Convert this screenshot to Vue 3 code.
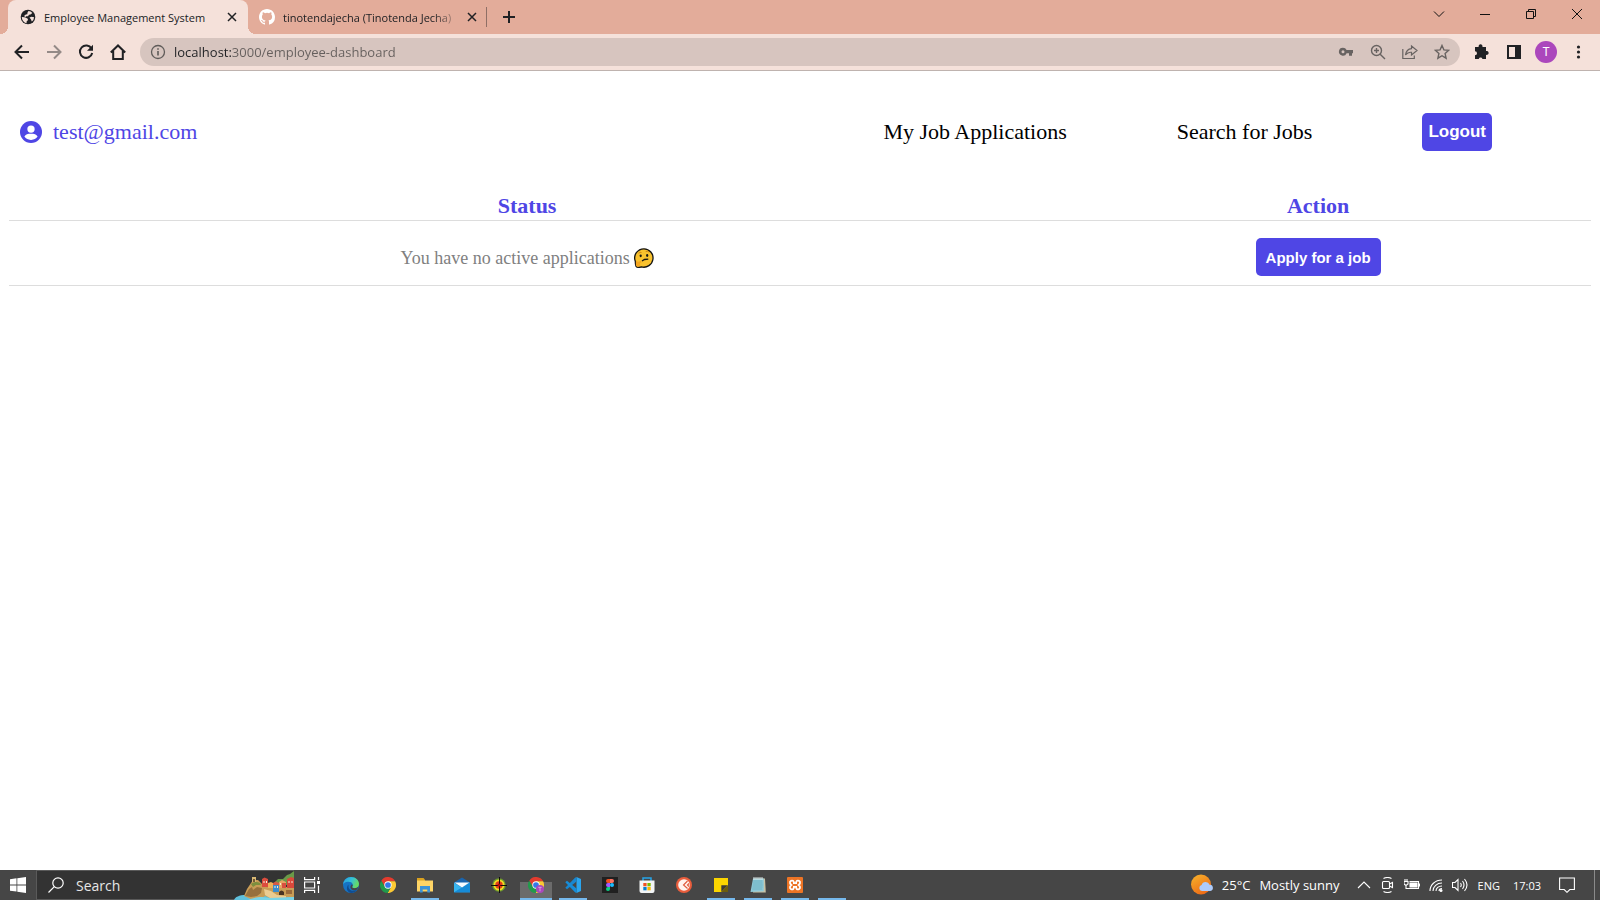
<script setup>
import { ref } from 'vue'

const address = ref('localhost:3000/employee-dashboard')
const query = ref('')
</script>

<template>
  <div class="screen">
    <header class="browser">
      <div class="strip">
        <div class="tabs" role="tablist">
          <div class="tab active" role="tab" aria-selected="true">
            <svg class="fav" viewBox="0 0 16 16"><circle cx="8" cy="8" r="7.3" fill="#202124" /><path d="M1.800 8l2.700.2 2 .8 1.500 1-.3 1.500-1 .8-.2 1.900C3.800 13.600 1.800 11 1.800 8zM8.500 2c1.500.2 2.800.8 3.800 1.900L10.500 5.500 9 5.800 8 7.200H6l-.5 1L4 7l1.800-1.500 1.500-.3.2-1.700zM9.500 8.500l2-.8 2.600.5a6.200 6.200 0 0 1-2.300 4.400l-.8-2z" fill="#f5e1da" /></svg>
            <span class="title">Employee Management System</span>
            <button class="close" aria-label="Close tab"><svg viewBox="0 0 10 10"><path d="M1 1l8 8M9 1L1 9" /></svg></button>
          </div>
          <div class="tab" role="tab" aria-selected="false">
            <svg class="fav" viewBox="0 0 16 16"><path fill="#fff" d="M8 0C3.580 0 0 3.580 0 8c0 3.540 2.290 6.530 5.470 7.590.4.07.55-.17.55-.38 0-.19-.01-.82-.01-1.490-2.010.37-2.530-.49-2.690-.94-.09-.23-.48-.94-.82-1.130-.28-.15-.68-.52-.01-.53.63-.01 1.080.58 1.230.82.72 1.210 1.870.87 2.330.66.07-.52.28-.87.51-1.070-1.780-.2-3.640-.89-3.640-3.950 0-.87.31-1.590.82-2.150-.08-.2-.36-1.020.08-2.120 0 0 .67-.21 2.200.82a7.600 7.600 0 0 1 4 0c1.530-1.040 2.200-.82 2.200-.82.44 1.100.16 1.920.08 2.120.51.56.82 1.270.82 2.150 0 3.070-1.870 3.750-3.650 3.950.29.25.54.73.54 1.480 0 1.070-.01 1.930-.01 2.200 0 .21.15.46.55.38A8 8 0 0 0 16 8c0-4.420-3.580-8-8-8z" /></svg>
            <span class="title faded">tinotendajecha (Tinotenda Jecha)</span>
            <button class="close" aria-label="Close tab"><svg viewBox="0 0 10 10"><path d="M1 1l8 8M9 1L1 9" /></svg></button>
          </div>
          <button class="newtab" aria-label="New tab"><svg viewBox="0 0 12 12"><path d="M6 0v12M0 6h12" /></svg></button>
        </div>
        <div class="window">
          <button aria-label="Search tabs"><svg viewBox="0 0 12 12"><path d="M1 3.500l5 5 5-5" /></svg></button>
          <button aria-label="Minimize"><svg viewBox="0 0 12 12"><path d="M1 6.500h10" /></svg></button>
          <button aria-label="Restore"><svg viewBox="0 0 12 12"><path d="M1.500 3.500h7v7h-7zM3.500 3.500v-2h7v7h-2" /></svg></button>
          <button aria-label="Close"><svg viewBox="0 0 12 12"><path d="M1 1l10 10M11 1L1 11" /></svg></button>
        </div>
      </div>

      <div class="toolbar">
        <button class="tool" aria-label="Back"><svg viewBox="0 0 16 16"><path d="M15 8H2M8 1.500L1.500 8 8 14.500" /></svg></button>
        <button class="tool dim" aria-label="Forward"><svg viewBox="0 0 16 16"><path d="M1 8h13M8 1.500L14.500 8 8 14.500" /></svg></button>
        <button class="tool" aria-label="Reload"><svg viewBox="0 0 16 16"><path d="M13.500 4.500A6.200 6.200 0 1 0 14.200 9" /><path d="M15 .8v6H9z" fill="#202124" stroke="none" /></svg></button>
        <button class="tool" aria-label="Home"><svg viewBox="0 0 16 16"><path d="M.8 8.500L8 1.500l7.200 7M3.200 7v8h9.600V7" /></svg></button>
        <div class="omnibox">
          <svg class="info" viewBox="0 0 16 16"><circle cx="8" cy="8" r="6.500" fill="none" stroke="#5f5b59" stroke-width="1.300" /><path d="M8 7v4.500M8 4.200v1.600" stroke="#5f5b59" stroke-width="1.600" /></svg>
          <input v-model="address" class="url" type="text" aria-label="Address" />
          <button class="tool" aria-label="Passwords"><svg viewBox="0 0 16 16"><path fill="#686361" stroke="none" fill-rule="evenodd" d="M5 3.700a4 4 0 1 0 3.600 5.500H11v2.500h3V9.200h1V6H8.600A4 4 0 0 0 5 3.700zM5 6.200a1.500 1.500 0 1 1 0 3 1.500 1.500 0 0 1 0-3z" /></svg></button>
          <button class="tool" aria-label="Zoom"><svg viewBox="0 0 16 16"><g stroke-width="1.400"><circle cx="6.500" cy="6.500" r="5" /><path d="M10.200 10.200l4.800 4.800M4 6.500h5M6.500 4v5" /></g></svg></button>
          <button class="tool" aria-label="Share"><svg viewBox="0 0 16 16"><g stroke-width="1.200"><path d="M.8 5v9.500h11.500v-3" /><path d="M9.500 2l5.500 4.500-5.500 4.500V8.300C7 8 5 9 3.500 11 4 7.500 6 5 9.500 4.700z" /></g></svg></button>
          <button class="tool" aria-label="Bookmark"><svg viewBox="0 0 16 16"><path stroke-width="1.400" d="M8 1.500l1.900 4.400 4.800.4-3.600 3.200 1 4.700L8 11.700l-4.100 2.500 1-4.700-3.600-3.200 4.800-.4z" /></svg></button>
        </div>
        <button class="tool" aria-label="Extensions"><svg viewBox="0 0 16 16"><path fill="#202124" stroke="none" d="M1 3h3.700a2 2 0 1 1 3.700 0H12v4a2 2 0 1 1 0 3.800V15H8.500a2 2 0 0 0-3.800 0H1v-3.700a2 2 0 0 0 0-4z" /></svg></button>
        <button class="tool" aria-label="Side panel"><svg viewBox="0 0 16 16"><path d="M2 2h12v12H2z" /><path d="M10 2h4v12h-4z" fill="#202124" /></svg></button>
        <button class="tool" aria-label="Profile"><span class="avatar">T</span></button>
        <button class="tool" aria-label="Menu"><svg viewBox="0 0 16 16"><g fill="#202124" stroke="none"><circle cx="8.500" cy="3" r="1.600" /><circle cx="8.500" cy="8" r="1.600" /><circle cx="8.500" cy="13" r="1.600" /></g></svg></button>
      </div>
    </header>

    <main class="page">
      <nav class="nav">
        <a class="user" href="#">
          <svg viewBox="0 0 24 24"><circle cx="12" cy="12" r="12" fill="#4f46e5" /><circle cx="12" cy="8.800" r="4" fill="#fff" /><path d="M4.800 17c1-2.500 4-3.100 7.200-3.100s6.200.6 7.200 3.100A8.600 8.600 0 0 1 12 20.600 8.600 8.600 0 0 1 4.800 17z" fill="#fff" /></svg>
          test@gmail.com
        </a>
        <div class="links">
          <a href="#">My Job Applications</a>
          <a href="#">Search for Jobs</a>
          <button class="logout">Logout</button>
        </div>
      </nav>

      <table class="jobs">
        <thead>
          <tr><th class="status" scope="col">Status</th><th scope="col">Action</th></tr>
        </thead>
        <tbody>
          <tr>
            <td>
              <span class="empty">You have no active applications
                <svg viewBox="0 0 20 20" role="img" aria-label="Confused face"><path d="M10 .8a9.200 9.200 0 1 1-2.500 18.100C5.500 19.700 2.500 19.600 2 18.300c-.6-1.300-.7-3-.7-5A9.200 9.200 0 0 1 10 .8z" fill="#f9c22e" stroke="#141414" stroke-width="1.300" /><path d="M1.900 13.500l1-.7.9 1.200 3-.9c1 0 1.200 1 .3 1.500l-1.300.6c1 1.200.3 3.300-1.900 3.500-1.500.1-2-1-2-2.200z" fill="#f5a51d" /><path d="M4.500 5.300Q6 3.900 7.500 4.500M11.700 3.600q2-.8 3.500.6" fill="none" stroke="#d48a16" stroke-width="1" /><ellipse cx="6.700" cy="7.800" rx="1.100" ry="1.400" fill="#171717" /><ellipse cx="13.200" cy="7.500" rx="1.100" ry="1.400" fill="#171717" /><path d="M8 13l2.500-1.500 3.800-.3" fill="none" stroke="#171717" stroke-width="1.300" /></svg>
              </span>
            </td>
            <td><button class="apply">Apply for a job</button></td>
          </tr>
        </tbody>
      </table>
    </main>

    <footer class="taskbar">
      <button class="start" aria-label="Start"><svg viewBox="0 0 16 16"><path fill="#fff" d="M0 2.300L6.500 1.300v6.200H0zM7.300 1.200L16 0v7.500H7.300zM0 8.400h6.500v6.200L0 13.700zM7.300 8.400H16V16l-8.700-1.200z" /></svg></button>
      <label class="search">
        <svg class="glass" viewBox="0 0 16 16"><circle cx="10" cy="6" r="5.200" /><path d="M6.300 9.700L.5 15.500" /></svg>
        <input v-model="query" type="text" placeholder="Search" aria-label="Search" />
        <svg class="scene" viewBox="0 0 60 30">
          <path d="M0 30c1-3 5-5 12-5h48v5z" fill="#5fc0dc" />
          <path d="M40 13l4-4 5 0 4-4 3-1 4-3v14H40z" fill="#6a9a48" />
          <path d="M10 26l3-7 4-6 2-3 5 0 4 4 8 4 8-1h16v10l-24 1-5-2-4 3-8 1z" fill="#c99d56" />
          <path d="M11 26l4-7 3-2 1 3 4-3 5 1-1 5-4 3-6 1z" fill="#97703c" />
          <path d="M17 14c2-2 6-3 9-1l1 2h-5l-3 2z" fill="#7d8f3e" />
          <path d="M18 7h4v5h-4z" fill="#d8b874" /><path d="M19 9h2v3h-2z" fill="#755a35" />
          <path d="M28 9l2.500-1.500L34 9v8h-6z" fill="#dc4d3e" /><path d="M34 13l3-1 2 1v5h-5z" fill="#efb45a" /><path d="M39 14h6v8h-6z" fill="#3d8ccd" /><path d="M39 13l3-1.500L45 13v2h-6z" fill="#d75b44" /><path d="M45 12l3-2 4 2v6h-7z" fill="#e7a464" /><path d="M48 13h4v5h-4z" fill="#d85041" /><path d="M53 9l4-2 3 1v10h-7z" fill="#d9483b" />
          <path d="M29.500 11h1v2h-1zM32 11h1v2h-1zM40.500 16h1v2h-1zM43 16h1v2h-1zM46 13h1v2h-1zM54.500 11h1v2h-1zM57.500 11h1v2h-1z" fill="#f7ebd7" />
          <path d="M45 25v-3q2.500-3 5 0v3z" fill="#4a3423" /><path d="M52 20h6v4h-6z" fill="#9b6b3b" />
          <path d="M30 19l7 2 6 4 9 1v2H36l-5-3z" fill="#ebcc92" />
          <path d="M14 30c6-2 9-3 14-3l8 1 24-1v3z" fill="#79d3e7" />
        </svg>
      </label>
      <button class="app view" aria-label="Task view"><svg viewBox="0 0 16 16"><g fill="none" stroke="#fff" stroke-width="1.200"><path d="M.6 0v2.600h10V0M.6 16v-2.600h10V16M.6 5h10v6H.6zM14.500 0v3M14.500 8.500V16" /></g><path d="M13 4h3v3h-3z" fill="#fff" /></svg></button>
      <button class="app" aria-label="Edge">
        <svg viewBox="0 0 16 16"><defs><linearGradient id="eg" x1="0" y1="0" x2="1" y2=".4"><stop offset="0" stop-color="#249bdf" /><stop offset=".55" stop-color="#35c1d9" /><stop offset="1" stop-color="#67dc62" /></linearGradient></defs><circle cx="8" cy="8" r="8" fill="#1673c4" /><path d="M0 7.500C.5 3 4 0 8 0c5 0 8 3.500 8 7 0 2.800-2 4.300-4.400 4.300-1.800 0-2.900-.8-2.400-1.500.6-.8.9-1.500.6-2.600C9.200 5.300 7 4.500 4.600 4.800 2.300 5.100.7 6.100 0 7.500z" fill="url(#eg)" /><path d="M5.500 9c-.3 4 4 6.200 8.500 3.800C12.500 15 10.500 16 8 16c-4-1-5.500-5-2.500-8.500z" fill="#104d91" /><path d="M9.200 9.800c-.5.700.6 1.500 2.400 1.500 1.500 0 2.900-.6 3.700-1.700l-1 3c-2 1.300-6 1-6.800-1.800-.3-1.300.3-2.500 1.500-3.500q1.300 1 .2 2.500z" fill="#464646" /></svg>
      </button>
      <button class="app" aria-label="Chrome">
        <svg viewBox="0 0 24 24"><path d="M12 6.500H22.700A12 12 0 0 0 1.900 5.500L7.240 14.750 12 12z" fill="#e33b2e" /><path d="M12 6.500H22.700A12 12 0 0 0 1.900 5.500L7.240 14.750 12 12z" fill="#fcc934" transform="rotate(120 12 12)" /><path d="M12 6.500H22.700A12 12 0 0 0 1.900 5.500L7.240 14.750 12 12z" fill="#229a4b" transform="rotate(240 12 12)" /><circle cx="12" cy="12" r="5.500" fill="#fff" /><circle cx="12" cy="12" r="4.300" fill="#3579e8" /></svg>
      </button>
      <button class="app open" aria-label="File Explorer"><svg viewBox="0 0 16 16"><path d="M0 1h6.500L8 2.800V6H0z" fill="#d9a11f" /><path d="M0 3.500h16v11H0z" fill="#ffd566" /><path d="M3 9h10v6.500h-2.700v-3H5.700v3H3z" fill="#3c94d8" /></svg></button>
      <button class="app" aria-label="Mail"><svg viewBox="0 0 16 16"><path d="M0 5.500L8 .5l8 5v9.700H0z" fill="#1a64ad" /><path d="M0 5.500l8 5.200 8-5.200v9.700H0z" fill="#37b5f0" /><path d="M0 15.200l16-9.700v9.700z" fill="#168bd7" /><path d="M.5 5.500h15L8 10.500z" fill="#f6fbff" /></svg></button>
      <button class="app" aria-label="Target"><svg viewBox="0 0 16 16"><circle cx="8" cy="8" r="6.800" fill="#6c9b2d" /><circle cx="8" cy="8" r="5.500" fill="#f4dc22" /><circle cx="8" cy="8" r="3.700" fill="#e23c1c" /><path d="M8.500 0v16M0 8.500h16" stroke="#120e08" stroke-width="1" /><circle cx="8" cy="8" r="1.500" fill="#b90909" /></svg></button>
      <button class="app open current" aria-label="Chrome, T">
        <svg viewBox="0 0 24 24"><path d="M12 6.500H22.700A12 12 0 0 0 1.900 5.500L7.240 14.750 12 12z" fill="#e33b2e" /><path d="M12 6.500H22.700A12 12 0 0 0 1.900 5.500L7.240 14.750 12 12z" fill="#fcc934" transform="rotate(120 12 12)" /><path d="M12 6.500H22.700A12 12 0 0 0 1.900 5.500L7.240 14.750 12 12z" fill="#229a4b" transform="rotate(240 12 12)" /><circle cx="12" cy="12" r="5.500" fill="#fff" /><circle cx="12" cy="12" r="4.300" fill="#3579e8" /><circle cx="18" cy="18" r="6" fill="#ab47bc" /><path d="M15.500 15.500h5M18 15.500v6" stroke="#dfaae8" stroke-width="1.300" /></svg>
      </button>
      <button class="app open" aria-label="Visual Studio Code"><svg viewBox="0 0 16 16"><path d="M11.500 0L16 2v12l-4.500 2z" fill="#2aa5ee" /><path d="M11.500 0v4.600L2 12.200.3 10.800 10 .8z" fill="#1787d1" /><path d="M11.500 16v-4.600L2 3.800.3 5.200l9.700 10z" fill="#168dd9" /></svg></button>
      <button class="app" aria-label="Figma"><svg viewBox="0 0 16 16"><path d="M0 0h16v16H0z" fill="#202020" /><path d="M8 2H6a2 2 0 0 0 0 4h2z" fill="#f24e1e" /><path d="M8 2h2a2 2 0 0 1 0 4H8z" fill="#ff7262" /><path d="M8 6H6a2 2 0 0 0 0 4h2z" fill="#a259ff" /><circle cx="10" cy="8" r="2" fill="#1abcfe" /><path d="M8 10H6a2 2 0 1 0 2 2z" fill="#0acf83" /></svg></button>
      <button class="app" aria-label="Microsoft Store"><svg viewBox="0 0 16 16"><path d="M4 4V1h8v3" fill="none" stroke="#26a4e8" stroke-width="1.500" /><path d="M.5 3.500h15V14a2 2 0 0 1-2 2h-11a2 2 0 0 1-2-2z" fill="#f3f5f6" /><path d="M4.300 6h3.300v3.300H4.300z" fill="#f05124" /><path d="M8.400 6h3.300v3.300H8.400z" fill="#7fba00" /><path d="M4.300 10h3.300v3.300H4.300z" fill="#087fcf" /><path d="M8.400 10h3.300v3.300H8.400z" fill="#fbb700" /></svg></button>
      <button class="app" aria-label="Clock"><svg viewBox="0 0 16 16"><circle cx="8" cy="8" r="8" fill="#e95d3c" /><circle cx="8" cy="8" r="5.800" fill="#fff2ed" /><path d="M11.500 4L7.500 8l4 3.500M13 6.500L11.500 8l1.500 1.500" fill="none" stroke="#df5737" stroke-width="1.100" /></svg></button>
      <button class="app open" aria-label="Sticky Notes"><svg viewBox="0 0 16 16"><path d="M1 1h14v14H1z" fill="#fbd500" /><path d="M8.300 15V8.300H15z" fill="#3a3936" /><path d="M8.300 15L15 8.300V15z" fill="#6b5b0d" /></svg></button>
      <button class="app open" aria-label="Notepad"><svg viewBox="0 0 16 16"><path d="M3.500 1.500H15l.8 14H3z" fill="#c8c2a5" /><path d="M3 1.500h10.800v12.800L.5 15z" fill="#8fc9d8" /><path d="M3.300 4h9M3 6h9.500M2.700 8h10M2.500 10h10M2.200 12h10" stroke="#5faabd" stroke-width=".7" /><path d="M4 0v3M6 0v3M8 0v3M10 0v3M12 0v3" stroke="#e9f4f5" stroke-width=".9" /></svg></button>
      <button class="app open" aria-label="XAMPP"><svg viewBox="0 0 16 16"><path d="M0 1q0-1 1-1h14q1 0 1 1v14q0 1-1 1H1q-1 0-1-1z" fill="#ed7425" /><path d="M4 3.800c2-.8 2.900.4 2.900 2.400h2.200c0-2 .9-3.200 2.900-2.400 2 1 .8 3.300-.4 4.200 1.200.9 2.400 3.200.4 4.200-2 .8-2.900-.4-2.900-2.400H6.900c0 2-.9 3.200-2.900 2.400-2-1-.8-3.300.4-4.200C3.200 7.100 2 4.800 4 3.800z" fill="none" stroke="#fff" stroke-width="1.800" /></svg></button>
      <button class="app open" aria-label="Application"></button>

      <div class="tray">
        <button class="weather">
          <svg viewBox="0 0 22 22"><defs><linearGradient id="sun" x1="0" y1="0" x2=".6" y2="1"><stop offset="0" stop-color="#f7b52c" /><stop offset="1" stop-color="#ee6b16" /></linearGradient></defs><circle cx="10" cy="10.500" r="10" fill="url(#sun)" /><path d="M11 17a3 3 0 0 1-.4-5.900 4.200 4.200 0 0 1 8-.3A3.100 3.100 0 0 1 19 17z" fill="#aecbfa" /></svg>
          <span>25°C</span><span>Mostly sunny</span>
        </button>
        <button class="icon" aria-label="Show hidden icons"><svg viewBox="0 0 16 16"><path d="M2 11l6-6 6 6" /></svg></button>
        <button class="icon" aria-label="Camera"><svg viewBox="0 0 16 16"><path d="M3.500 4.500h5a1 1 0 0 1 1 1v5a1 1 0 0 1-1 1h-5a1 1 0 0 1-1-1v-5a1 1 0 0 1 1-1zM9.500 7l3-1.500v5l-3-1.500M3.500 1.500q4-2 8 0M3.500 14.500q4 2 8 0" /></svg></button>
        <button class="icon" aria-label="Battery"><svg viewBox="0 0 16 16"><path d="M5.500 4.500h9v7H6M0 4.500h4V7L2 8.500 0 7zM1 2v2.500M3 2v2.500M2 8.500v3h4M15.500 6.500v3" /><path d="M6 6h7v4H6z" fill="#fff" /></svg></button>
        <button class="icon" aria-label="Wi-Fi"><svg viewBox="0 0 16 16"><path d="M2 14C2 8 7 3 14 3M5 14c0-4.500 4-8 9-8M8 14c0-3 2.500-5 6-5M11 14c0-1.500 1-2.500 3-2.500" /><circle cx="13" cy="13.500" r="1.500" fill="#fff" stroke="none" /></svg></button>
        <button class="icon" aria-label="Volume"><svg viewBox="0 0 16 16"><path d="M.5 5.500H3L6 2.500v11L3 10.500H.5zM8.500 6q1.500 2 0 4M10.500 4q3 4 0 8M12.500 2q5 6 0 12" /></svg></button>
        <button class="lang">ENG</button>
        <button class="clock">17:03</button>
        <button class="notice" aria-label="Notifications"><svg viewBox="0 0 16 16"><path d="M.6 1h14.800v11.500h-4.600L8 15.300l-2.800-2.800H.6z" /></svg></button>
      </div>
      <button class="desktop" aria-label="Show desktop"></button>
    </footer>
  </div>
</template>

<style>
body { margin: 0; }
</style>

<style scoped>
* { box-sizing: border-box; }
button { border: 0; padding: 0; background: none; color: inherit; font: inherit; }
a { color: inherit; text-decoration: none; }
input { border: 0; padding: 0; min-width: 0; background: none; outline: none; font: inherit; }
svg { display: block; flex: none; }
.screen { min-height: 100vh; display: flex; flex-direction: column; background: #fff; font-family: "Liberation Serif", serif; }

.browser { background: #f5e1da; border-bottom: 1px solid #bfb3af; font-family: "Open Sans", sans-serif; color: #202124; }
.strip { display: flex; justify-content: space-between; height: 34px; background: #e3ac9a; }
.tabs { display: flex; padding-left: 8px; }
.tab { position: relative; width: 240px; display: flex; align-items: center; padding: 0 10px 0 11px; font-size: 11px; }
.tab.active { padding-left: 12px; background: #f5e1da; border-radius: 8px 8px 0 0; }
.tab.active::before, .tab.active::after { content: ""; position: absolute; bottom: 0; width: 8px; height: 8px; }
.tab.active::before { right: 100%; background: radial-gradient(circle at 0 0, transparent 8px, #f5e1da 8px); }
.tab.active::after { left: 100%; background: radial-gradient(circle at 100% 0, transparent 8px, #f5e1da 8px); }
.tab:not(.active)::after { content: ""; position: absolute; right: 1px; top: 7px; width: 1px; height: 20px; background: #8f6f66; }
.fav { width: 16px; height: 16px; margin-right: 8px; }
.title { flex: 1; white-space: nowrap; }
.faded { max-width: 178px; mask-image: linear-gradient(90deg, #000 150px, transparent 178px); }
.close { width: 12px; height: 16px; display: grid; place-items: center; margin-left: auto; }
.close svg { width: 10px; height: 10px; stroke: #202124; stroke-width: 1.5; }
.newtab { width: 42px; display: grid; place-items: center; }
.newtab svg { width: 12px; height: 12px; stroke: #202124; stroke-width: 2; }
.window { display: flex; height: 28px; }
.window button { width: 46px; display: grid; place-items: center; }
.window svg { width: 12px; height: 12px; fill: none; stroke: #111; stroke-width: 1; }

.toolbar { display: flex; align-items: center; height: 36px; padding: 0 6px; }
.tool { flex: none; width: 32px; height: 28px; display: grid; place-items: center; }
.tool svg { width: 16px; height: 16px; fill: none; stroke: #202124; stroke-width: 2; }
.dim { opacity: .45; }
.omnibox { flex: 1; display: flex; align-items: center; height: 28px; margin: 0 6px; padding: 0 2px 0 10px; border-radius: 14px; background: #d7c5bf; }
.omnibox .tool svg { stroke: #686361; }
.info { width: 16px; height: 16px; margin-right: 8px; }
.url { flex: 1; font-size: 13px; color: transparent; background: linear-gradient(90deg, #202124 57px, #655f5d 57px); background-clip: text; }
.avatar { width: 22px; height: 22px; border-radius: 50%; background: #ab47bc; color: #fff; font: 12px/22px Roboto, sans-serif; text-align: center; }

.page { flex: 1; padding: 42px 9px 0; }
.nav { display: flex; justify-content: space-between; align-items: center; padding: 0 99px 0 11px; font-size: 22px; line-height: 26px; }
.user { display: flex; align-items: center; gap: 11px; color: #4f46e5; }
.user svg { width: 22px; height: 22px; }
.links { display: flex; align-items: center; gap: 110px; }
.logout, .apply { height: 38px; border-radius: 5px; background: #4f46e5; color: #fff; font-family: "Liberation Sans", Arial, sans-serif; font-weight: 700; }
.logout { padding: 0 6px; font-size: 17px; }
.apply { padding: 0 10px; font-size: 15px; }
.jobs { width: 100%; margin-top: 42px; border-collapse: collapse; table-layout: fixed; text-align: center; }
.jobs th { padding: 0 0 1px; color: #4f46e5; font-size: 22px; line-height: 26px; border-bottom: 1px solid #ddd; }
.status { width: 65.5%; }
.jobs td { padding: 17px 0 9px; vertical-align: middle; border-bottom: 1px solid #ddd; }
.empty { display: flex; justify-content: center; align-items: center; gap: 4px; padding-top: 2px; color: #808080; font-size: 18px; line-height: 22px; }
.empty svg { width: 20px; height: 20px; }
.jobs button { display: block; margin: 0 auto; }

.taskbar { display: flex; height: 30px; background: #464646; color: #fff; font-family: "Open Sans", sans-serif; }
.start { width: 36px; display: grid; place-items: center; }
.start svg { width: 16px; height: 16px; }
.search { display: flex; align-items: center; width: 258px; padding-left: 11px; background: #333; border: 1px solid #5a5a5a; border-right: 0; }
.glass { width: 16px; height: 16px; fill: none; stroke: #fff; stroke-width: 1.2; }
.search input { flex: 1; margin-left: 12px; font-size: 14px; color: #fff; }
.search input::placeholder { color: #e6e6e6; opacity: 1; }
.scene { width: 60px; height: 30px; }
.app { width: 37px; display: grid; place-items: center; position: relative; }
.view { width: 36px; margin-right: 2px; }
.app svg { width: 16px; height: 16px; position: relative; }
.open::after { content: ""; position: absolute; left: 5px; right: 4px; bottom: 0; height: 2px; background: #76b9ed; }
.current::before { content: ""; position: absolute; left: 3px; right: 2px; top: 12px; bottom: 0; background: #6b6b6b; }
.current::after { left: 3px; right: 2px; }
.tray { display: flex; align-items: center; margin-left: auto; font-size: 11px; white-space: nowrap; }
.tray button { height: 30px; }
.weather { display: flex; align-items: center; gap: 9px; margin-right: 12px; font-size: 13px; }
.weather svg { width: 22px; height: 22px; }
.icon { width: 24px; display: grid; place-items: center; }
.icon svg, .notice svg { width: 16px; height: 16px; fill: none; stroke: #fff; stroke-width: 1.1; }
.lang { margin-left: 6px; }
.clock { margin-left: 13px; }
.notice { margin: 0 19px 0 18px; }
.desktop { width: 6px; border-left: 1px solid #8a8a8a; }
</style>
